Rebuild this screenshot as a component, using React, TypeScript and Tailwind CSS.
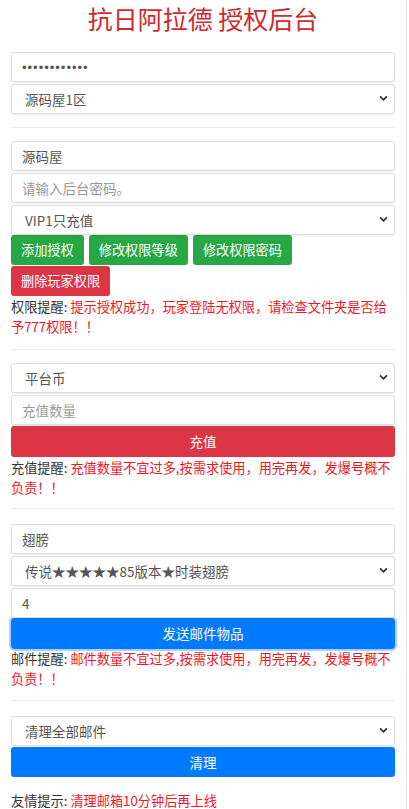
import React from 'react'

const font = { fontFamily: '"Noto Sans CJK SC", "Noto Sans", sans-serif' }

function Field(props: { value?: string; placeholder?: string }) {
  return (
    <input
      type="text"
      defaultValue={props.value}
      placeholder={props.placeholder}
      className="block w-full h-[30px] px-[10px] text-[13.5px] text-[#555] placeholder:text-[#9a9a9a] bg-white border border-[#dedede] rounded-[3px] shadow-[0_1px_2px_rgba(0,0,0,0.07)] outline-none"
    />
  )
}

function Select(props: { value: string }) {
  return (
    <div className="relative">
      <select className="block w-full h-[30px] pl-[13px] pr-6 text-[13.5px] text-[#555] bg-white border border-[#dedede] rounded-[3px] shadow-[0_1px_2px_rgba(0,0,0,0.07)] appearance-none outline-none">
        <option>{props.value}</option>
      </select>
      <svg className="absolute right-[7px] top-[11px] w-[9px] h-[7px] pointer-events-none" viewBox="0 0 10 7">
        <path d="M1.2 1.2 L5 5 L8.8 1.2" fill="none" stroke="#333" strokeWidth="2" />
      </svg>
    </div>
  )
}

function Tip(props: { label: string; text: string }) {
  return (
    <div className="text-[13.2px] leading-[20px]">
      <span className="text-[#333]">{props.label}: </span>
      <span className="text-[#f0171f]">{props.text}</span>
    </div>
  )
}

function Rule() {
  return <div className="h-px bg-[#ececec]" />
}

export default function App() {
  return (
    <div style={font} className="w-[407px] min-h-[809px] bg-white border-r border-[#e4e4e4]">
      <div className="px-[11px]">
        <h1 className="text-center text-[25px] leading-[36px] text-[#d3292c]">抗日阿拉德 授权后台</h1>

        <div className="mt-[16px] flex flex-col gap-[2px]">
          <input
            type="text"
            defaultValue="••••••••••••"
            style={{ fontFamily: '"Liberation Sans", sans-serif' }}
            className="block w-full h-[30px] px-[10px] text-[13px] tracking-[1px] text-[#555] bg-white border border-[#dedede] rounded-[3px] shadow-[0_1px_2px_rgba(0,0,0,0.07)] outline-none"
          />
          <Select value="源码屋1区" />
        </div>

        <div className="mt-[13px]"><Rule /></div>

        <div className="mt-[13px] flex flex-col gap-[2px]">
          <Field value="源码屋" />
          <Field placeholder="请输入后台密码。" />
          <Select value="VIP1只充值" />
        </div>
        <div className="flex gap-[5px]">
          <button className="h-[30px] px-[10px] text-[13.2px] text-white bg-[#28a745] rounded-[3px]">添加授权</button>
          <button className="h-[30px] px-[10px] text-[13.2px] text-white bg-[#28a745] rounded-[3px]">修改权限等级</button>
          <button className="h-[30px] px-[10px] text-[13.2px] text-white bg-[#28a745] rounded-[3px]">修改权限密码</button>
        </div>
        <div className="flex mt-px">
          <button className="h-[30px] px-[10px] text-[13.2px] text-white bg-[#dc3545] rounded-[3px]">删除玩家权限</button>
        </div>
        <div className="mt-[1px]">
          <Tip label="权限提醒" text="提示授权成功，玩家登陆无权限，请检查文件夹是否给予777权限！！" />
        </div>

        <div className="mt-[12px]"><Rule /></div>

        <div className="mt-[13px] flex flex-col gap-[2px]">
          <Select value="平台币" />
          <Field placeholder="充值数量" />
        </div>
        <button className="block w-full h-[31px] mt-px text-[13.5px] text-white bg-[#dc3545] rounded-[3px]">充值</button>
        <div className="mt-[1px]">
          <Tip label="充值提醒" text="充值数量不宜过多,按需求使用，用完再发，发爆号概不负责！！" />
        </div>

        <div className="mt-[10px]"><Rule /></div>

        <div className="mt-[15px] flex flex-col gap-[2px]">
          <Field value="翅膀" />
          <Select value="传说★★★★★85版本★时装翅膀" />
          <Field value="4" />
        </div>
        <button className="block w-full h-[31px] text-[13.5px] text-white bg-[#007bff] rounded-[4px] shadow-[0_0_0_2px_rgba(0,123,255,0.35)]">发送邮件物品</button>
        <div>
          <Tip label="邮件提醒" text="邮件数量不宜过多,按需求使用，用完再发，发爆号概不负责！！" />
        </div>

        <div className="mt-[11px]"><Rule /></div>

        <div className="mt-[15px]">
          <Select value="清理全部邮件" />
        </div>
        <button className="block w-full h-[30px] mt-px text-[13.5px] text-white bg-[#007bff] rounded-[3px]">清理</button>
        <div className="mt-[14px]">
          <Tip label="友情提示" text="清理邮箱10分钟后再上线" />
        </div>
      </div>
    </div>
  )
}
